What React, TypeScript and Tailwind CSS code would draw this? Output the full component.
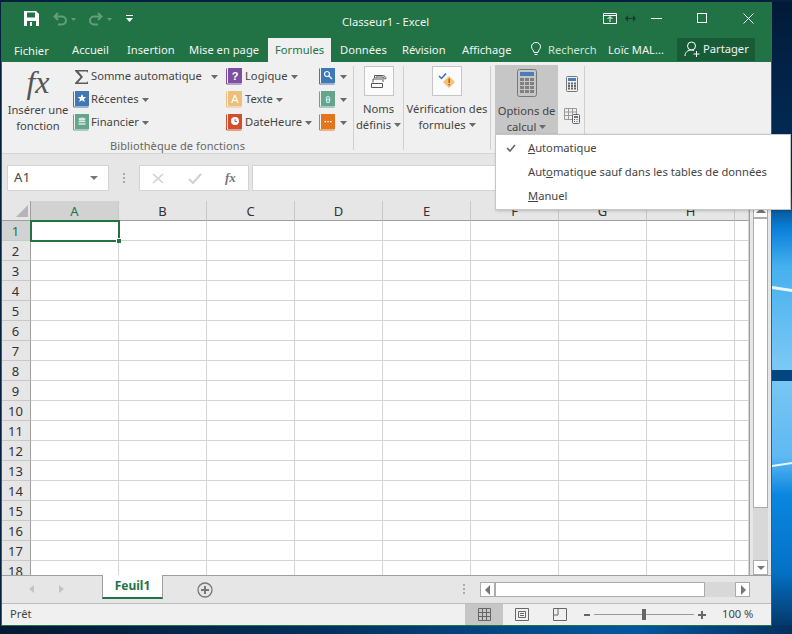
import type { ReactNode } from 'react';

const ROWS = Array.from({ length: 18 }, (_, i) => i + 1);
const COLS = ['A', 'B', 'C', 'D', 'E', 'F', 'G', 'H', ''];

const Caret = ({ className = '' }: { className?: string }) => (
  <svg width="7" height="4" viewBox="0 0 7 4" className={`shrink-0 ${className}`}>
    <path d="M0 0h7L3.5 4z" fill="#6a6a6a" />
  </svg>
);

// livre colore du ruban
const Book = ({ color, children }: { color: string; children?: ReactNode }) => (
  <svg width="16" height="17" viewBox="0 0 16 17" className="shrink-0">
    <path d="M0.5 0.5v15.5h15" fill="none" stroke={color} strokeWidth="1" />
    <rect x="2" y="0" width="14" height="15" fill={color} />
    {children}
  </svg>
);

const Calc = ({ big }: { big?: boolean }) =>
  big ? (
    <svg width="20" height="28" viewBox="0 0 20 28">
      <rect x="0.5" y="0.5" width="19" height="27" rx="2" fill="#c6c6c6" stroke="#777" />
      <rect x="3" y="3" width="14" height="4" fill="#4a7ebb" />
      {[9, 13, 17, 21].map((y) =>
        [3, 8, 13].map((x) => <rect key={`${x}-${y}`} x={x} y={y} width="4" height="3" fill="#808080" />),
      )}
    </svg>
  ) : (
    <svg width="12" height="16" viewBox="0 0 12 16">
      <rect x="0.5" y="0.5" width="11" height="15" rx="1" fill="#f0f0f0" stroke="#777" />
      <rect x="2" y="2" width="8" height="3" fill="#4a7ebb" />
      {[6.5, 9, 11.5].map((y) =>
        [2, 5, 8].map((x) => <rect key={`${x}-${y}`} x={x} y={y} width="2" height="2" fill="#666" />),
      )}
    </svg>
  );

const RibbonLine = ({ icon, label, wide }: { icon: ReactNode; label: string; wide?: boolean }) => (
  <div className="flex h-[23px] items-center">
    <div className={`flex justify-start ${wide ? 'w-[19px]' : 'w-[18px]'}`}>{icon}</div>
    <span>{label}</span>
    <Caret className="ml-[3px]" />
  </div>
);

const Separator = () => <div className="mt-[4px] h-[84px] w-px bg-[#cfcfcf]" />;

const Scroll = ({ dir }: { dir: 'left' | 'right' | 'up' | 'down' }) => {
  const d = {
    left: 'M2 5l5-5v10z',
    right: 'M8 5l-5-5v10z',
    up: 'M0 7l5-5 5 5z',
    down: 'M1 3h8l-4 4z',
  }[dir];
  return (
    <div className="flex h-[15px] w-[15px] shrink-0 items-center justify-center border border-[#ababab] bg-white">
      <svg width="10" height="10" viewBox="0 0 10 10">
        <path d={d} fill="#777" />
      </svg>
    </div>
  );
};

export default function App() {
  return (
    <div className="relative h-[634px] w-[792px] overflow-hidden bg-[#03203f] font-['Noto_Sans',sans-serif] text-[11.2px] text-[#444]">
      {/* fond d'ecran */}
      <svg className="absolute inset-0" width="792" height="634" viewBox="0 0 792 634">
        <defs>
          <linearGradient id="strip" x1="0" y1="0" x2="0" y2="1">
            <stop offset="0" stopColor="#021a38" />
            <stop offset="0.3" stopColor="#02305f" />
            <stop offset="0.36" stopColor="#0a7fd8" />
            <stop offset="0.42" stopColor="#45b0ef" />
            <stop offset="0.58" stopColor="#7cc8f4" />
            <stop offset="0.72" stopColor="#5fb9f2" />
            <stop offset="0.78" stopColor="#0a86e0" />
            <stop offset="0.9" stopColor="#0472c6" />
            <stop offset="1" stopColor="#04305e" />
          </linearGradient>
          <linearGradient id="bottom" x1="0" y1="0" x2="1" y2="0">
            <stop offset="0" stopColor="#031a33" />
            <stop offset="0.4" stopColor="#03305c" />
            <stop offset="0.8" stopColor="#0458a0" />
            <stop offset="1" stopColor="#04305e" />
          </linearGradient>
        </defs>
        <rect x="770" width="22" height="634" fill="url(#strip)" />
        <rect x="0" y="625" width="792" height="9" fill="url(#bottom)" />
        <rect x="772" y="370" width="20" height="11" fill="#03457f" />
        <path d="M772 286l20 3v3l-20-3zM772 465l20-3v2l-20 3z" fill="#e8f6ff" />
        <rect x="0" y="0" width="792" height="2" fill="#04203e" />
      </svg>

      <div className="relative ml-px mt-[2px] flex h-[624px] w-[771px] flex-col border border-[#217346] bg-[#e6e6e6]">
        {/* barre de titre */}
        <div className="flex h-[35px] shrink-0 items-start bg-[#217346] text-white">
          <div className="ml-[22px] mt-[8px] flex items-center">
            <svg width="15" height="15" viewBox="0 0 15 15">
              <path d="M0 0h12l3 3v12H0z" fill="#fff" />
              <rect x="3" y="1.5" width="8" height="5" fill="#217346" />
              <rect x="3" y="10" width="9" height="5" fill="#217346" />
              <rect x="6" y="11" width="2" height="4" fill="#fff" />
            </svg>
            <svg width="24" height="14" viewBox="0 0 24 14" className="ml-[14px] opacity-30">
              <path d="M5 1L1.5 4.5 5 8M2 4.5h7a4 4 0 0 1 0 8H5" fill="none" stroke="#fff" strokeWidth="2" />
              <path d="M18 6h5l-2.5 3z" fill="#fff" />
            </svg>
            <svg width="24" height="14" viewBox="0 0 24 14" className="ml-[11px] opacity-30">
              <path d="M10 1l3.5 3.5L10 8M13 4.500H6a4 4 0 0 0 0 8h4" fill="none" stroke="#fff" strokeWidth="2" />
              <path d="M19 6h5l-2.500 3z" fill="#fff" />
            </svg>
            <svg width="7" height="7" viewBox="0 0 7 7" className="ml-[14px]">
              <path d="M0 0h7v1H0zM0 3h7L3.500 7z" fill="#fff" />
            </svg>
          </div>
          <span className="ml-[209px] mt-[10px] leading-[18px] text-[#f2f2f2]">Classeur1 - Excel</span>
          <svg width="14" height="11" viewBox="0 0 14 11" className="ml-[174px] mt-[10px]">
            <path d="M.5.5h13v10H.5zM1 2.500h12M7 9V4M4.500 6L7 3.500 9.500 6" fill="none" stroke="#fff" />
          </svg>
          <svg width="11" height="7" viewBox="0 0 11 7" className="ml-[8px] mt-[12px]">
            <path d="M0 3.500L3 0v7zM11 3.500L8 0v7zM3 3h5v1H3z" fill="#1c3b2a" />
          </svg>
          <div className="ml-[15px] mt-[15px] h-px w-[11px] bg-white" />
          <div className="ml-[35px] mt-[10px] h-[10px] w-[10px] border border-white" />
          <svg width="11" height="11" viewBox="0 0 11 11" className="ml-[36px] mt-[10px]">
            <path d="M.5.5l10 10M10.500.5l-10 10" stroke="#fff" fill="none" />
          </svg>
        </div>

        {/* onglets */}
        <div className="flex h-[24px] shrink-0 items-stretch bg-[#217346] text-[#f2f2f2]">
          <span className="ml-[12px] mt-[5px] w-[58px]">Fichier</span>
          <span className="mt-[4px] w-[55px]">Accueil</span>
          <span className="mt-[4px] w-[62px]">Insertion</span>
          <span className="mt-[4px] w-[79px]">Mise en page</span>
          <div className="w-[63px] bg-[#f0f0f0] pl-[7px] pt-[4px] text-[#217346]">Formules</div>
          <span className="ml-[9px] mt-[4px] w-[62px]">Données</span>
          <span className="mt-[4px] w-[60px]">Révision</span>
          <span className="mt-[4px] w-[69px]">Affichage</span>
          <svg width="10" height="14" viewBox="0 0 10 14" className="mt-[4px]">
            <path d="M3 10.500C3 8 .5 7.500.5 4.500a4.500 4 0 0 1 9 0C9.500 7.500 7 8 7 10.500zM3.500 12.500h3" fill="none" stroke="#fff" />
          </svg>
          <span className="ml-[7px] mt-[4px] w-[60px] text-[#cfe3d7]">Recherch</span>
          <span className="mt-[4px] w-[69px]">Loïc MAL...</span>
          <div className="mb-px flex w-[78px] items-center bg-[#185c37] pl-[7px]">
            <svg width="17" height="17" viewBox="0 0 17 17">
              <circle cx="7.500" cy="5" r="4" fill="none" stroke="#fff" />
              <path d="M1 15c0-4 3-6 6.500-6 1 0 2 .2 2.500.5M12.500 10v6M9.500 13h6" fill="none" stroke="#fff" />
            </svg>
            <span className="ml-[2px]">Partager</span>
          </div>
        </div>

        {/* ruban */}
        <div className="flex h-[92px] shrink-0 border-b border-[#d4d4d4] bg-[#f0f0f0]">
          <div className="flex w-[351px] flex-col">
            <div className="flex h-[75px]">
              <div className="ml-[5px] flex w-[62px] flex-col items-center">
                <span className="mt-[2px] h-[38px] font-['Liberation_Serif',serif] text-[32px] italic leading-[36px] text-[#555]">fx</span>
                <span className="whitespace-nowrap text-center leading-[16px]">
                  Insérer une
                  <br />
                  fonction
                </span>
              </div>
              <div className="ml-[4px] mt-[3px] w-[153px]">
                <div className="flex h-[23px] items-center">
                  <svg width="18" height="16" viewBox="0 0 16 16" className="shrink-0">
                    <path d="M1 1h13v3l-1-1.500H4.500L9 8l-5 5.500h9l1-1.500v3H1v-1l5.500-6L1 2z" fill="#5a5a5a" />
                  </svg>
                  <span>Somme automatique</span>
                  <Caret className="ml-[9px]" />
                </div>
                <RibbonLine
                  label="Récentes"
                  icon={
                    <Book color="#3f78b5">
                      <path d="M9 3l1.300 3h3l-2.400 2 1 3L9 9.300 6.100 11l1-3-2.400-2h3z" fill="#fff" />
                    </Book>
                  }
                />
                <RibbonLine
                  label="Financier"
                  icon={
                    <Book color="#65a58c">
                      <ellipse cx="9" cy="5" rx="3.500" ry="1.500" fill="#d7e8e0" />
                      <path d="M5.500 7.500h7M5.500 10h7" stroke="#d7e8e0" strokeWidth="1.500" />
                    </Book>
                  }
                />
              </div>
              <div className="mt-[3px] w-[93px]">
                <RibbonLine
                  wide
                  label="Logique"
                  icon={
                    <Book color="#7e4f9e">
                      <text x="9" y="12" textAnchor="middle" fontSize="11" fontWeight="700" fill="#fff" fontFamily="Liberation Sans, sans-serif">?</text>
                    </Book>
                  }
                />
                <RibbonLine
                  wide
                  label="Texte"
                  icon={
                    <Book color="#edbf7e">
                      <text x="9" y="12" textAnchor="middle" fontSize="11" fill="#fff" fontFamily="Liberation Sans, sans-serif">A</text>
                    </Book>
                  }
                />
                <RibbonLine
                  wide
                  label="DateHeure"
                  icon={
                    <Book color="#d24f2e">
                      <circle cx="9" cy="7" r="4" fill="#fff" />
                      <path d="M9 5v2.500h2" stroke="#d24f2e" fill="none" />
                    </Book>
                  }
                />
              </div>
              <div className="mt-[3px] w-[28px]">
                {[
                  { color: '#3f78b5', glyph: <path d="M8 3.500a2.500 2.500 0 1 0 .01 0M10 8l3 3" stroke="#fff" strokeWidth="1.200" fill="none" /> },
                  { color: '#65a58c', glyph: <text x="9" y="12" textAnchor="middle" fontSize="10" fill="#fff" fontFamily="Liberation Serif, serif">θ</text> },
                  { color: '#e3761c', glyph: <path d="M5.500 7h1.500v1.200H5.500zM8.300 7h1.500v1.200H8.300zM11 7h1.500v1.200H11z" fill="#fff" /> },
                ].map((b) => (
                  <div key={b.color} className="flex h-[23px] items-center gap-[5px]">
                    <Book color={b.color}>{b.glyph}</Book>
                    <Caret />
                  </div>
                ))}
              </div>
            </div>
            <div className="mt-[2px] text-center text-[11px] leading-[14px] tracking-[0.1px] text-[#666]">Bibliothèque de fonctions</div>
          </div>

          <Separator />

          <div className="flex w-[49px] flex-col items-center">
            <div className="mt-[4px] flex h-[30px] w-[30px] items-center justify-center border border-[#c6c6c6] bg-[#fbfbfb]">
              <svg width="17" height="16" viewBox="0 0 17 16">
                <path d="M1.500 10.500h11v4h-11zM3 9.500V6h9M4.500 5V2.500h8c2 0 3.500 1.500 3.500 3.500M13 9V4.500c1.500 0 2 1 2 2M6 5V4h7" fill="none" stroke="#555" />
              </svg>
            </div>
            <div className="mt-[5px] text-center leading-[16px]">
              Noms
              <br />
              <span className="inline-flex items-center">
                définis
                <Caret className="ml-[3px]" />
              </span>
            </div>
          </div>

          <Separator />

          <div className="flex w-[86px] flex-col items-center">
            <div className="mt-[4px] flex h-[30px] w-[30px] items-center justify-center border border-[#c6c6c6] bg-[#fbfbfb]">
              <svg width="18" height="18" viewBox="0 0 18 18">
                <path d="M11 4l6 6-6 6-6-6z" fill="#f2c374" />
                <path d="M10.500 6.500h1.400v4.500h-1.400zM10.500 12h1.400v1.500h-1.400z" fill="#d2452a" />
                <path d="M1 4l2.500 2.500L8 1.500" fill="none" stroke="#2f72c0" strokeWidth="1.500" />
              </svg>
            </div>
            <div className="mt-[5px] whitespace-nowrap text-center leading-[16px]">
              Vérification des
              <br />
              <span className="inline-flex items-center">
                formules
                <Caret className="ml-[3px]" />
              </span>
            </div>
          </div>

          <Separator />

          {/* bouton Options de calcul et son menu */}
          <div className="relative ml-[4px] mt-[3px] flex h-[69px] w-[63px] flex-col items-center bg-[#c6c6c6]">
            <div className="mt-[4px] h-[28px]">
              <Calc big />
            </div>
            <div className="mt-[6px] whitespace-nowrap text-center leading-[16px]">
              Options de
              <br />
              <span className="inline-flex items-center">
                calcul
                <Caret className="ml-[3px]" />
              </span>
            </div>
            <div className="absolute left-0 top-full z-10 h-[76px] w-[296px] border border-[#c6c6c6] bg-white pt-px shadow-[1px_1px_3px_rgba(0,0,0,0.2)]">
              <svg width="10" height="8" viewBox="0 0 10 8" className="absolute left-[10px] top-[9px]">
                <path d="M1 4l3 3 5-6" fill="none" stroke="#666" strokeWidth="1.600" />
              </svg>
              <div className="ml-[32px] flex h-[24px] items-center">
                <span><u>A</u>utomatique</span>
              </div>
              <div className="ml-[32px] flex h-[24px] items-center">
                <span>Aut<u>o</u>matique sauf dans les tables de données</span>
              </div>
              <div className="ml-[32px] flex h-[24px] items-center">
                <span><u>M</u>anuel</span>
              </div>
            </div>
          </div>

          <div className="ml-[3px] mt-[14px] flex w-[22px] flex-col items-center">
            <Calc />
            <svg width="16" height="16" viewBox="0 0 16 16" className="mt-[16px]">
              <path d="M.5.500h12v11H.5zM.5 4h12M.5 7.500h12M4.500.5v11M8.500.5v11" fill="none" stroke="#999" />
              <rect x="8.500" y="6.500" width="7" height="9" rx="1" fill="#f0f0f0" stroke="#666" />
              <rect x="10" y="8" width="4" height="2" fill="#4a7ebb" />
              <path d="M10 11.500h1M12.500 11.500h1M10 13.500h1M12.500 13.500h1" stroke="#555" />
            </svg>
          </div>
          <div className="ml-[1px] mt-[4px] h-[84px] w-px bg-[#cfcfcf]" />
        </div>

        {/* barre de formule */}
        <div className="flex h-[47px] shrink-0 items-start bg-[#e6e6e6] pt-[11px]">
          <div className="ml-[5px] flex h-[26px] w-[102px] items-center justify-between border border-[#d4d4d4] bg-white pl-[6px] pr-[10px] text-[13px] tracking-[0.5px]">
            <span>A1</span>
            <svg width="8" height="4" viewBox="0 0 8 4">
              <path d="M0 0h8L4 4z" fill="#777" />
            </svg>
          </div>
          <div className="ml-[14px] mt-[8px] flex h-[10px] w-[3px] flex-col justify-between">
            <div className="h-[2px] w-[2px] bg-[#aaa]" />
            <div className="h-[2px] w-[2px] bg-[#aaa]" />
            <div className="h-[2px] w-[2px] bg-[#aaa]" />
          </div>
          <div className="ml-[13px] flex h-[26px] w-[110px] items-center border border-[#d4d4d4] bg-white">
            <svg width="12" height="11" viewBox="0 0 12 11" className="ml-[12px]">
              <path d="M1 1l10 9M11 1L1 10" stroke="#d0d0d0" strokeWidth="1.600" />
            </svg>
            <svg width="14" height="11" viewBox="0 0 14 11" className="ml-[24px]">
              <path d="M1 6l4 4 8-9" fill="none" stroke="#d0d0d0" strokeWidth="2" />
            </svg>
            <span className="ml-[23px] font-['Liberation_Serif',serif] text-[13px] font-bold italic text-[#777]">fx</span>
          </div>
          <div className="ml-[3px] h-[26px] flex-1 border border-[#d4d4d4] bg-white" />
        </div>

        {/* feuille */}
        <div className="flex h-[374px] shrink-0 items-stretch">
          <div className="relative h-[374px] w-[748px] shrink-0 overflow-hidden border-r border-[#9f9f9f]">
            <div className="grid grid-cols-[29px_repeat(8,88px)_14px] grid-rows-[20px] auto-rows-[20px]">
              <div className="flex items-end justify-end border-b border-r border-[#9f9f9f] bg-[#e6e6e6] pb-[3px] pr-[2px]">
                <svg width="12" height="12" viewBox="0 0 12 12">
                  <path d="M12 0v12H0z" fill="#b5b5b5" />
                </svg>
              </div>
              {COLS.map((c, i) => (
                <div
                  key={i}
                  className={`flex items-center justify-center border-b border-r border-b-[#9f9f9f] border-r-[#c8c8c8] pt-[3px] text-[13px] ${
                    c === 'A' ? 'bg-[#d2d2d2] text-[#217346]' : 'bg-[#e6e6e6] text-[#333]'
                  }`}
                >
                  {c}
                </div>
              ))}
              {ROWS.map((r) => (
                <div key={r} className="contents">
                  <div
                    className={`flex items-center justify-center border-b border-r border-b-[#c8c8c8] border-r-[#9f9f9f] pr-px pt-[2px] text-[13px] ${
                      r === 1 ? 'bg-[#d2d2d2] text-[#217346]' : 'bg-[#e6e6e6] text-[#333]'
                    }`}
                  >
                    {r}
                  </div>
                  {COLS.map((_, i) => (
                    <div key={i} className="border-b border-r border-[#d4d4d4] bg-white" />
                  ))}
                </div>
              ))}
            </div>
            {/* selection A1 */}
            <div className="absolute left-[28px] top-[19px] h-[22px] w-[90px] border-2 border-[#217346]">
              <div className="absolute -bottom-[3px] -right-[3px] h-[5px] w-[5px] border-l border-t border-white bg-[#217346]" />
            </div>
          </div>
          <div className="ml-[3px] flex w-[15px] flex-col">
            <div className="mt-[2px]">
              <Scroll dir="up" />
            </div>
            <div className="h-[290px] border border-[#ababab] bg-white" />
            <div className="h-[52px] bg-[#d8d8d8]" />
            <Scroll dir="down" />
          </div>
        </div>

        {/* onglets de feuilles */}
        <div className="flex h-[29px] shrink-0 items-start border-b border-t border-b-[#bdbdbd] border-t-[#9f9f9f] bg-[#e6e6e6]">
          <svg width="6" height="8" viewBox="0 0 6 8" className="ml-[27px] mt-[9px]">
            <path d="M5 0v8L0 4z" fill="#c4c4c4" />
          </svg>
          <svg width="6" height="8" viewBox="0 0 6 8" className="ml-[23px] mt-[9px]">
            <path d="M1 0v8l5-4z" fill="#c4c4c4" />
          </svg>
          <div className="relative -mt-px ml-[38px] flex h-[24px] w-[61px] items-center justify-center border-b-2 border-l border-r border-[#9f9f9f] border-b-[#217346] bg-white text-[12px] font-bold text-[#217346]">
            Feuil1
          </div>
          <svg width="16" height="16" viewBox="0 0 16 16" className="ml-[34px] mt-[6px]">
            <circle cx="8" cy="8" r="7" fill="none" stroke="#777" strokeWidth="1.300" />
            <path d="M8 4v8M4 8h8" stroke="#777" strokeWidth="2" />
          </svg>
          <div className="ml-[250px] mt-[8px] flex h-[10px] flex-col justify-between">
            <div className="h-[2px] w-[2px] bg-[#aaa]" />
            <div className="h-[2px] w-[2px] bg-[#aaa]" />
            <div className="h-[2px] w-[2px] bg-[#aaa]" />
          </div>
          <div className="ml-[15px] mt-[6px] flex w-[270px]">
            <Scroll dir="left" />
            <div className="h-[15px] w-[210px] border border-[#ababab] bg-white" />
            <div className="h-[15px] w-[30px] bg-[#d8d8d8]" />
            <Scroll dir="right" />
          </div>
        </div>

        {/* barre d'etat */}
        <div className="flex flex-1 items-center bg-[#f0f0f0]">
          <span className="ml-[8px] w-[455px]">Prêt</span>
          <div className="flex h-full w-[38px] items-center justify-center bg-[#c6c6c6]">
            <svg width="13" height="13" viewBox="0 0 13 13">
              <path d="M.5.500h12v12H.5zM.5 4.500h12M.5 8.500h12M4.500.5v12M8.500.5v12" fill="none" stroke="#666" />
            </svg>
          </div>
          <svg width="14" height="13" viewBox="0 0 14 13" className="ml-[12px]">
            <path d="M.5.500h13v12H.5zM3.500 3.500h7v6h-7zM5 5.500h4M5 7.500h4" fill="none" stroke="#666" />
          </svg>
          <svg width="14" height="13" viewBox="0 0 14 13" className="ml-[24px]">
            <path d="M.5.500h13v12H.5zM5 .5v6.500H.5" fill="none" stroke="#666" />
          </svg>
          <div className="ml-[17px] h-[2px] w-[6px] bg-[#666]" />
          <div className="relative ml-[4px] h-px w-[100px] bg-[#9a9a9a]">
            <div className="absolute left-[48px] top-[-5px] h-[11px] w-[4px] bg-[#666]" />
          </div>
          <svg width="8" height="8" viewBox="0 0 8 8" className="ml-[4px]">
            <path d="M3 0h2v3h3v2H5v3H3V5H0V3h3z" fill="#666" />
          </svg>
          <span className="ml-[16px]">100 %</span>
        </div>
      </div>
    </div>
  );
}
